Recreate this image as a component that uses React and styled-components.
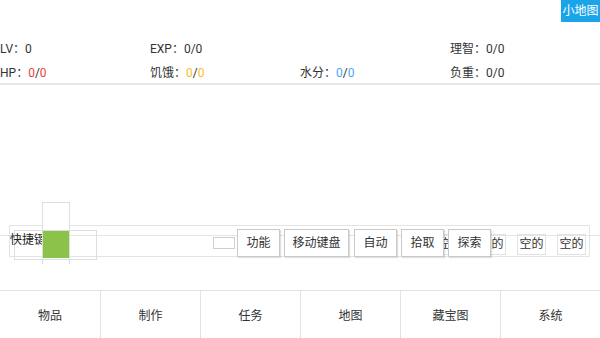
import styled, { createGlobalStyle } from "styled-components";

const GlobalStyle = createGlobalStyle`
  html, body {
    margin: 0;
    padding: 0;
    background: #fff;
  }
  body {
    font-family: Roboto, "Noto Sans CJK SC", sans-serif;
    color: #333;
  }
`;

const Page = styled.div`
  height: 100vh;
  display: flex;
  flex-direction: column;
  overflow: hidden;
`;

const TopBar = styled.div`
  display: flex;
  justify-content: flex-end;
  height: 22px;
`;

const MiniMapButton = styled.button`
  width: 39px;
  height: 22px;
  padding: 0;
  border: 0;
  background: #1aa4ea;
  color: #fff;
  font: 12px/22px Roboto, "Noto Sans CJK SC", sans-serif;
`;

const Stats = styled.div`
  display: grid;
  grid-template-columns: repeat(4, 150px);
  grid-template-rows: 24px 21px;
  padding-top: 16px;
  font-size: 12px;
  line-height: 22px;
`;

const Stat = styled.div`
  white-space: nowrap;
`;

const Value = styled.span`
  color: ${(p) => p.$color || "#333"};
`;

const Divider = styled.div`
  height: 2px;
  background: #e8e8e8;
`;

const Spacer = styled.div`
  flex: 1;
`;

const HotkeyArea = styled.div`
  position: relative;
  height: 60px;
  margin-bottom: 28px;
`;

const Frame = styled.div`
  position: absolute;
  left: 9px;
  right: 10px;
  top: 23px;
  height: 29px;
  border: 1px solid #e4e4e4;
  display: flex;
  justify-content: flex-end;
  align-items: flex-end;
  gap: 11px;
  padding: 0 3px 1px 0;
`;

const LongLine = styled.div`
  position: absolute;
  left: 0;
  right: 0;
  top: 33px;
  border-top: 1px solid #e4e4e4;
`;

const Slot = styled.div`
  flex: none;
  width: 29px;
  height: 21px;
  box-sizing: border-box;
  border: 1px solid #e2e2e2;
  background: #fff;
  font-size: 12px;
  line-height: 19px;
  text-align: center;
  white-space: nowrap;
`;

const LabelBox = styled.div`
  position: absolute;
  left: 14px;
  top: 28px;
  width: 83px;
  height: 30px;
  box-sizing: border-box;
  border: 1px solid #dedede;
`;

const LabelText = styled.span`
  position: absolute;
  left: -5px;
  top: 1px;
  font-size: 12px;
  line-height: 16px;
  color: #222;
  white-space: nowrap;
`;

const Column = styled.div`
  position: absolute;
  left: 42px;
  top: 0;
  width: 28px;
  height: 62px;
  box-sizing: border-box;
  border-left: 1px solid #dedede;
  border-right: 1px solid #dedede;
  display: flex;
  flex-direction: column;
`;

const Cell = styled.div`
  flex: none;
  height: 28px;
  border-top: 1px solid #dedede;
  box-sizing: border-box;
  background: ${(p) => (p.$active ? "#8bc34a" : "#fff")};
`;

const SmallBox = styled.div`
  position: absolute;
  left: 213px;
  top: 35px;
  width: 20px;
  height: 10px;
  border: 1px solid #cfcfcf;
  background: #fff;
`;

const Actions = styled.div`
  position: absolute;
  left: 237px;
  top: 27px;
  display: flex;
`;

const ActionButton = styled.button`
  flex: none;
  width: ${(p) => p.$w}px;
  height: 28px;
  padding: 0;
  margin-left: ${(p) => p.$gap || 0}px;
  border: 1px solid #c9c9c9;
  background: #fff;
  box-shadow: 1px 1px 1px rgba(0, 0, 0, 0.12);
  color: #333;
  font: 12px/26px Roboto, "Noto Sans CJK SC", sans-serif;
  white-space: nowrap;
`;

const Nav = styled.div`
  display: grid;
  grid-template-columns: repeat(6, 1fr);
  height: 48px;
  box-sizing: border-box;
  border-top: 1px solid #e2e2e2;
`;

const NavItem = styled.div`
  display: flex;
  align-items: center;
  justify-content: center;
  font-size: 12px;
  color: #333;
  border-left: ${(p) => (p.$first ? "none" : "1px solid #e2e2e2")};
`;

const navItems = ["物品", "制作", "任务", "地图", "藏宝图", "系统"];

const actions = [
  { label: "功能", w: 43, gap: 0 },
  { label: "移动键盘", w: 65, gap: 4 },
  { label: "自动", w: 43, gap: 5 },
  { label: "拾取", w: 43, gap: 4 },
  { label: "探索", w: 43, gap: 4 },
];

export default function App() {
  return (
    <Page>
      <GlobalStyle />
      <TopBar>
        <MiniMapButton>小地图</MiniMapButton>
      </TopBar>
      <Stats>
        <Stat>LV：0</Stat>
        <Stat>EXP：0/0</Stat>
        <Stat />
        <Stat>理智：0/0</Stat>
        <Stat>
          HP：<Value $color="#f23b3b">0</Value>/<Value $color="#f23b3b">0</Value>
        </Stat>
        <Stat>
          饥饿：<Value $color="#fbbd2c">0</Value>/<Value $color="#fbbd2c">0</Value>
        </Stat>
        <Stat>
          水分：<Value $color="#4aa6f2">0</Value>/<Value $color="#4aa6f2">0</Value>
        </Stat>
        <Stat>负重：0/0</Stat>
      </Stats>
      <Divider />
      <Spacer />
      <HotkeyArea>
        <Frame>
          {Array.from({ length: 4 }).map((_, i) => (
            <Slot key={i}>空的</Slot>
          ))}
        </Frame>
        <LongLine />
        <LabelBox>
          <LabelText>快捷键</LabelText>
        </LabelBox>
        <Column>
          <Cell />
          <Cell $active />
        </Column>
        <SmallBox />
        <Actions>
          {actions.map((a) => (
            <ActionButton key={a.label} $w={a.w} $gap={a.gap}>
              {a.label}
            </ActionButton>
          ))}
        </Actions>
      </HotkeyArea>
      <Nav>
        {navItems.map((t, i) => (
          <NavItem key={t} $first={i === 0}>
            {t}
          </NavItem>
        ))}
      </Nav>
    </Page>
  );
}
